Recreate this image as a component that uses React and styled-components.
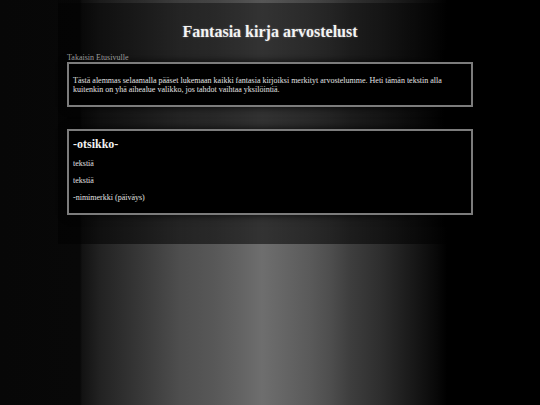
import React from "react";
import styled, { createGlobalStyle } from "styled-components";

const GlobalStyle = createGlobalStyle`
  html, body {
    margin: 0;
    padding: 0;
  }
  body {
    font-family: "Liberation Serif", "Times New Roman", serif;
    background-color: #000;
  }
`;

// vertical light streak behind everything, repeats down the page
const Page = styled.div`
  min-height: 100vh;
  background: linear-gradient(
    to right,
    #070707 0px,
    #080808 80px,
    #121212 82px,
    #222222 100px,
    #3a3a3a 145px,
    #4e4e4e 180px,
    #585858 215px,
    #636363 240px,
    #6e6e6e 262px,
    #666666 282px,
    #5a5a5a 310px,
    #4e4e4e 330px,
    #3e3e3e 350px,
    #2e2e2e 380px,
    #1a1a1a 410px,
    #080808 437px,
    #000000 447px
  );
  overflow: hidden;
`;

const Wrapper = styled.div`
  width: 424px;
  margin: 0 auto;
  padding: 0 9px 29px;
  box-sizing: border-box;
  background: linear-gradient(
    to bottom,
    rgba(0, 0, 0, 0.22) 0px,
    rgba(0, 0, 0, 0.22) 3px,
    rgba(0, 0, 0, 0.54) 3px
  );
`;

const Title = styled.h1`
  margin: 0;
  padding-top: 23px;
  font-size: 16px;
  line-height: 18px;
  font-weight: bold;
  text-align: center;
  color: #f4f4f4;
  text-shadow: 0 0 2px rgba(255, 255, 255, 0.35);
`;

const BackLink = styled.a`
  display: block;
  margin-top: 12px;
  font-size: 8px;
  line-height: 9px;
  color: #9a9a9a;
  text-decoration: none;
  cursor: pointer;
`;

const Box = styled.div`
  margin-top: ${(props) => props.gap || 0}px;
  padding: 4px 4px 3px;
  background: #000;
  border: 2px solid #7c7c7c;
  box-shadow: 0 0 8px rgba(0, 0, 0, 0.85);
  color: #e2e2e2;
`;

const Heading = styled.h2`
  margin: 2px 0 0;
  font-size: 12px;
  line-height: 14px;
  font-weight: bold;
  color: #f2f2f2;
`;

const Text = styled.p`
  margin: 8px 0;
  font-size: 8px;
  line-height: 9px;
`;

const App = () => {
  return (
    <Page>
      <GlobalStyle />
      <Wrapper>
        <Title>Fantasia kirja arvostelust</Title>
        <BackLink>Takaisin Etusivulle</BackLink>
        <Box>
          <Text>
            Tästä alemmas selaamalla pääset lukemaan kaikki fantasia kirjoiksi
            merkityt arvostelumme. Heti tämän tekstin alla kuitenkin on yhä
            aihealue valikko, jos tahdot vaihtaa yksilöintiä.
          </Text>
        </Box>
        <Box gap={22}>
          <Heading>-otsikko-</Heading>
          <Text>tekstiä</Text>
          <Text>tekstiä</Text>
          <Text>-nimimerkki (päiväys)</Text>
        </Box>
      </Wrapper>
    </Page>
  );
};

export default App;
